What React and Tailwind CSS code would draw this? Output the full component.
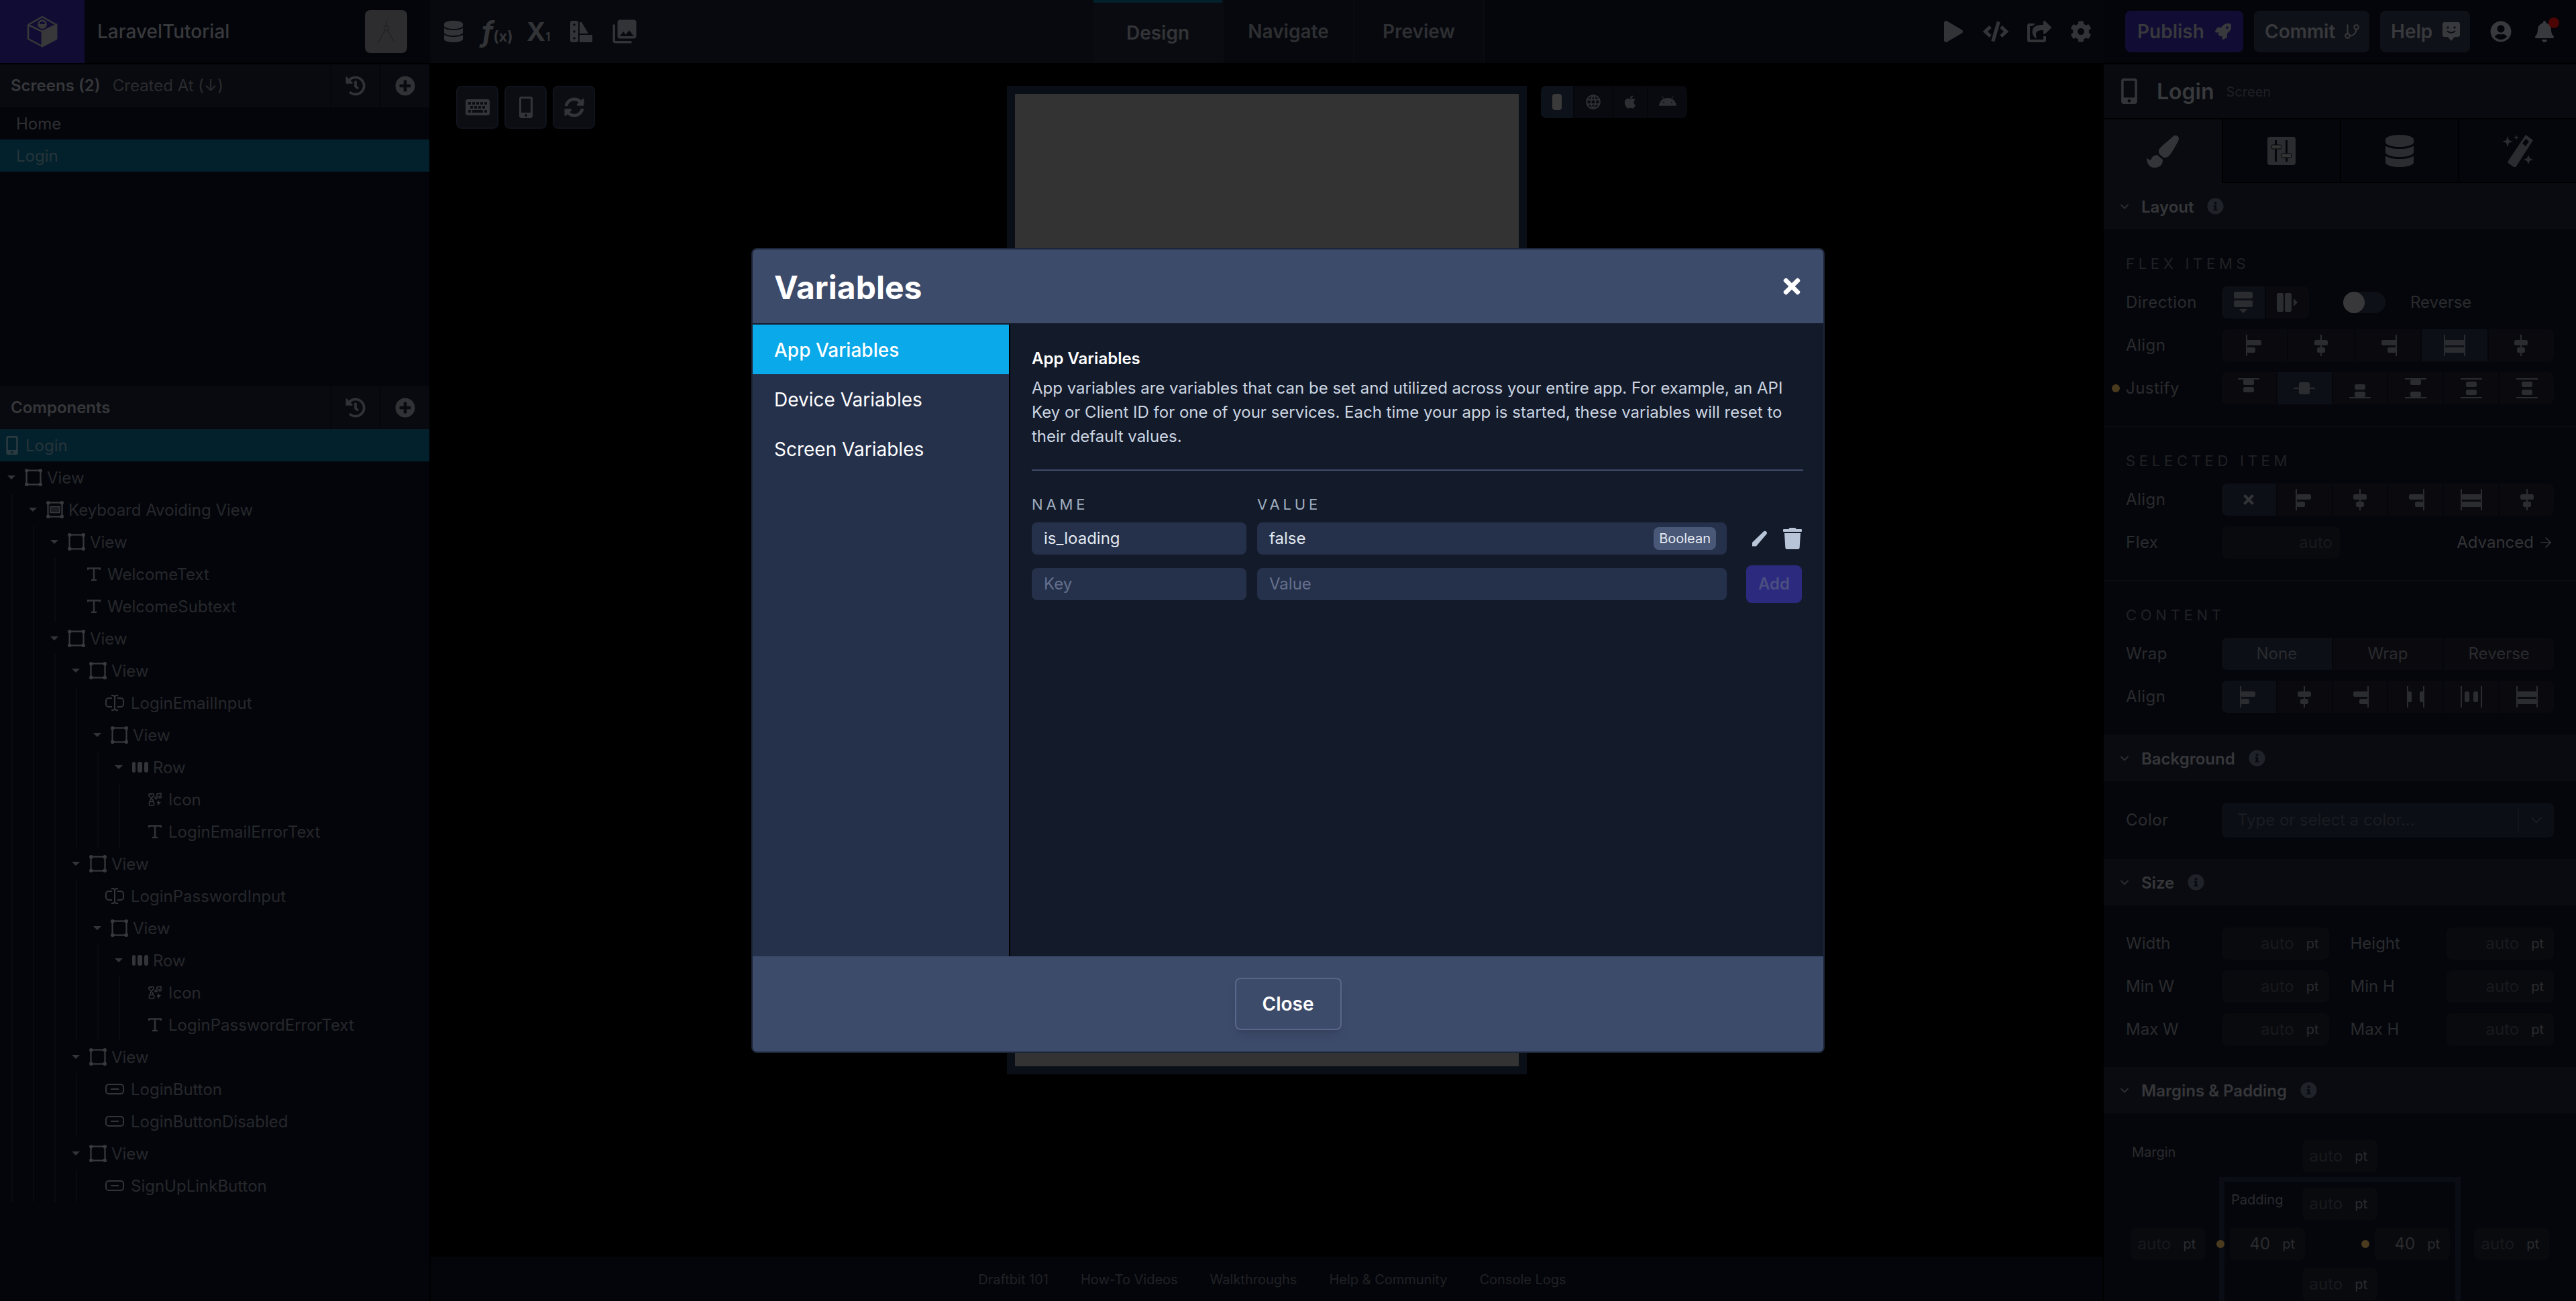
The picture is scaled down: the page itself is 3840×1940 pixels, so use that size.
import React from "react";
import {
  FaBell,
  FaCode,
  FaCog,
  FaDatabase,
  FaInfoCircle,
  FaKeyboard,
  FaMobileAlt,
  FaPaintBrush,
  FaPlay,
  FaPlusCircle,
  FaRocket,
  FaShareSquare,
  FaSyncAlt,
  FaTimes,
  FaTrash,
  FaUserCircle,
  FaApple,
  FaAndroid,
  FaHistory,
} from "react-icons/fa";
import { MdPhotoLibrary } from "react-icons/md";
import { TbWorld } from "react-icons/tb";
import { ArrowRight, ChevronDown, GitBranch } from "lucide-react";

const Logo = () => (
  <svg width="48" height="48" viewBox="0 0 48 48" fill="none" stroke="#38383a" strokeWidth="2.5">
    <path d="M24 2 45 14v21L24 46 3 35V14z" strokeLinejoin="round" />
    <path d="M24 24 45 14v21L24 46z" fill="#38383a" />
    <path d="M3 14 24 24v22" />
    <circle cx="24" cy="13" r="5.5" />
    <path d="M18.5 13a5.5 5.5 0 0 0 11 0" fill="#38383a" />
  </svg>
);

const CompassIcon = () => (
  <svg width="26" height="32" viewBox="0 0 26 32" fill="none" stroke="#222224" strokeWidth="1.5">
    <circle cx="13" cy="11" r="3.500" />
    <path d="M13 0v7.500M11 14 1 32M15 14l10 18" />
  </svg>
);

const SwatchIcon = () => (
  <svg width="33" height="32" viewBox="0 0 33 32" fill="#323336">
    <rect x="0" y="0" width="12" height="32" rx="3" />
    <circle cx="6" cy="6" r="1.8" fill="#07090e" />
    <circle cx="6" cy="16" r="1.8" fill="#07090e" />
    <circle cx="6" cy="26" r="1.8" fill="#07090e" />
    <path d="M14 2h3l10 17H14zM14 21h19v11H14z" />
  </svg>
);

const HelpIcon = () => (
  <svg width="26" height="28" viewBox="0 0 26 28">
    <path d="M3 0h20a3 3 0 0 1 3 3v16a3 3 0 0 1-3 3h-5l-5 6-5-6H3a3 3 0 0 1-3-3V3a3 3 0 0 1 3-3z" fill="#38393c" />
    <circle cx="8" cy="8" r="1.800" fill="#0f1118" />
    <circle cx="18" cy="8" r="1.800" fill="#0f1118" />
    <path d="M7 13c3 3.500 9 3.500 12 0" fill="none" stroke="#0f1118" strokeWidth="2" />
  </svg>
);

const PencilIcon = () => (
  <svg width="24" height="24" viewBox="0 0 24 24" fill="#b8c4d8">
    <path d="M18 1.500a3 3 0 0 1 4.500 3.800L7 23.500H1V18z" />
  </svg>
);

const SliderTabIcon = () => (
  <svg width="42" height="42" viewBox="0 0 42 42" fill="#2b2c2f">
    <rect width="42" height="42" rx="4" />
    <path d="M11 5h3v32h-3zM27 5h3v32h-3z" fill="#05060b" />
    <rect x="6" y="12" width="15" height="6" rx="2" fill="#333" stroke="#05060b" />
    <rect x="21" y="25" width="15" height="6" rx="2" fill="#333" stroke="#05060b" />
  </svg>
);

const WandIcon = () => (
  <svg width="48" height="48" viewBox="0 0 48 48" fill="#2b2c2f">
    <path d="M36 0 47 8 22 47a3 3 0 0 1-4 1l-7-5a3 3 0 0 1-1-4z" />
    <path d="M36 6 41 10 36 17 31 13z" fill="#05060b" />
    <path d="M9 2l2 6 6 2-6 2-2 6-2-6-6-2 6-2zM22 0l1 3 3 1-3 1-1 3-1-3-3-1 3-1zM40 30l2 5 5 2-5 2-2 5-2-5-5-2 5-2z" />
  </svg>
);

const ViewIcon = ({ keyboard }) => (
  <svg width="26" height="26" viewBox="0 0 26 26" fill="none" stroke="#38393c" strokeWidth="2.2">
    <rect x="2.500" y="2.500" width="21" height="21" />
    <g fill="#38393c" stroke="none">
      <circle cx="2.800" cy="2.800" r="2.800" />
      <circle cx="23.200" cy="2.800" r="2.800" />
      <circle cx="2.800" cy="23.200" r="2.800" />
      <circle cx="23.200" cy="23.200" r="2.800" />
    </g>
    {keyboard && <rect x="6" y="8.500" width="14" height="9" strokeWidth="1.5" stroke="#38393c" fill="#1c1d20" />}
  </svg>
);

const TextIcon = () => (
  <svg width="20" height="20" viewBox="0 0 20 20" fill="none" stroke="#333437" strokeWidth="2.4">
    <path d="M1 4V1.500h18V4M10 1.500V19M6 19h8" />
  </svg>
);

const InputIcon = () => (
  <svg width="28" height="24" viewBox="0 0 28 24" fill="none" stroke="#333437" strokeWidth="2">
    <path d="M10 5H5a4 4 0 0 0-4 4v5a4 4 0 0 0 4 4h5M18 5h5a4 4 0 0 1 4 4v5a4 4 0 0 1-4 4h-5" />
    <path d="M9 1h3l2 2 2-2h3M9 23h3l2-2 2 2h3M14 3v18" />
  </svg>
);

const ButtonIcon = () => (
  <svg width="28" height="16" viewBox="0 0 28 16" fill="none" stroke="#333437" strokeWidth="2">
    <rect x="1" y="1" width="26" height="14" rx="4" />
    <path d="M8 8h12" />
  </svg>
);

const RowIcon = () => (
  <svg width="24" height="16" viewBox="0 0 24 16" fill="#333437">
    <rect x="0" y="0" width="5" height="16" rx="2.500" />
    <rect x="8" y="0" width="7" height="16" rx="3" />
    <rect x="18" y="0" width="6" height="16" rx="3" />
  </svg>
);

const GlyphIcon = () => (
  <svg width="20" height="20" viewBox="0 0 20 20" fill="none" stroke="#333437" strokeWidth="1.6">
    <path d="M4.500 8.500 1 4.500C0 2.500 3 .5 4.500 2.500 6-.5 9 2.500 8 4.500z" />
    <path d="M13 7V2l6-1v5M13 7a1.500 1.500 0 1 1-2-1M19 6a1.500 1.500 0 1 1-2-1" />
    <rect x="1.500" y="13.500" width="7" height="5.500" rx="1" />
    <path d="M3 13v-1.500a2 2 0 0 1 4 0V13" />
    <path d="M16 11l-4 5h3l-1 4 5-6h-3z" fill="#333437" stroke="none" />
  </svg>
);

const treeIcons = {
  view: <ViewIcon />,
  kav: <ViewIcon keyboard />,
  row: <RowIcon />,
  text: <TextIcon />,
  input: <InputIcon />,
  button: <ButtonIcon />,
  icon: <GlyphIcon />,
};

const tree = [
  {
    kind: "view",
    label: "View",
    items: [
      {
        kind: "kav",
        label: "Keyboard Avoiding View",
        items: [
          {
            kind: "view",
            label: "View",
            items: [
              { kind: "text", label: "WelcomeText", indent: "ml-[27px]" },
              { kind: "text", label: "WelcomeSubtext", indent: "ml-[27px]" },
            ],
          },
          {
            kind: "view",
            label: "View",
            items: [
              {
                kind: "view",
                label: "View",
                items: [
                  { kind: "input", label: "LoginEmailInput" },
                  {
                    kind: "view",
                    label: "View",
                    items: [
                      {
                        kind: "row",
                        label: "Row",
                        items: [
                          { kind: "icon", label: "Icon" },
                          { kind: "text", label: "LoginEmailErrorText" },
                        ],
                      },
                    ],
                  },
                ],
              },
              {
                kind: "view",
                label: "View",
                items: [
                  { kind: "input", label: "LoginPasswordInput" },
                  {
                    kind: "view",
                    label: "View",
                    items: [
                      {
                        kind: "row",
                        label: "Row",
                        items: [
                          { kind: "icon", label: "Icon" },
                          { kind: "text", label: "LoginPasswordErrorText" },
                        ],
                      },
                    ],
                  },
                ],
              },
              {
                kind: "view",
                label: "View",
                items: [
                  { kind: "button", label: "LoginButton" },
                  { kind: "button", label: "LoginButtonDisabled" },
                ],
              },
              {
                kind: "view",
                label: "View",
                items: [{ kind: "button", label: "SignUpLinkButton" }],
              },
            ],
          },
        ],
      },
    ],
  },
];

const TreeNode = ({ node }) => {
  if (!node.items) {
    return (
      <div className="flex h-[48px] items-center">
        <span className={`flex items-center gap-[10px] ${node.indent || "ml-[22px]"}`}>
          {treeIcons[node.kind]}
          <span className="whitespace-nowrap pt-[2px]">{node.label}</span>
        </span>
      </div>
    );
  }
  return (
    <div>
      <div className="flex h-[48px] items-center">
        <span className="flex w-[20px] justify-center">
          <span className="h-0 w-0 border-x-[6px] border-t-[6px] border-x-transparent border-t-[#333437]" />
        </span>
        <span className="ml-[10px] flex items-center gap-[7px]">
          {treeIcons[node.kind]}
          <span className="whitespace-nowrap pt-[2px]">{node.label}</span>
        </span>
      </div>
      <div className="ml-[10px] border-l-2 border-[#0a0b10] pl-[20px]">
        {node.items.map((child, i) => (
          <TreeNode key={i} node={child} />
        ))}
      </div>
    </div>
  );
};

const PanelHeader = ({ children }) => (
  <div className="flex h-[64px] items-center bg-[#090a0f]">
    <div className="flex flex-1 items-center pl-[16px] text-[24px]">{children}</div>
    <div className="flex h-full w-[74px] items-center justify-center border-l-2 border-[#05060a] text-[30px] text-[#313235]">
      <FaHistory />
    </div>
    <div className="flex h-full w-[74px] items-center justify-center border-l-2 border-[#05060a] text-[30px] text-[#313235]">
      <FaPlusCircle />
    </div>
  </div>
);

const LeftPanel = () => (
  <aside className="flex w-[640px] shrink-0 flex-col bg-[#04050a] text-[24px] text-[#26282c]">
    <div className="h-[480px]">
      <PanelHeader>
        <span className="font-semibold text-[#36373a]">Screens (2)</span>
        <span className="ml-[18px] text-[#2a2b2e]">Created At (↓)</span>
      </PanelHeader>
      <div className="flex h-[48px] items-center pl-[24px] pt-[2px] text-[#2e2f32]">Home</div>
      <div className="flex h-[48px] items-center bg-[#03212c] pl-[24px] pt-[2px] text-[#26343a]">Login</div>
    </div>
    <PanelHeader>
      <span className="font-semibold text-[#36373a]">Components</span>
    </PanelHeader>
    <div className="flex h-[48px] items-center gap-[6px] bg-[#03212c] pl-[4px] text-[#26343a]">
      <FaMobileAlt className="text-[28px] text-[#2a3a40]" />
      <span className="pt-[2px]">Login</span>
    </div>
    <div className="pl-[7px]">
      {tree.map((node, i) => (
        <TreeNode key={i} node={node} />
      ))}
    </div>
  </aside>
);

const TopBar = () => (
  <header className="flex h-[96px] shrink-0 border-b-2 border-black bg-[#04050a]">
    <div className="flex w-[640px] shrink-0 items-center">
      <div className="flex h-full w-[126px] items-center justify-center bg-[#110c33]">
        <Logo />
      </div>
      <span className="ml-[19px] text-[28px] font-medium text-[#38393c]">LaravelTutorial</span>
      <div className="ml-auto mr-[33px] flex h-[64px] w-[63px] items-center justify-center rounded-lg bg-[#2d2d2f]">
        <CompassIcon />
      </div>
    </div>
    <div className="flex flex-1 border-l-2 border-[#05060a] bg-[#05060b]">
      <div className="flex w-[988px] items-center bg-[#07090e] pl-[18px] text-[#323336]">
        <FaDatabase className="text-[32px]" />
        <span className="ml-[26px] flex w-[41px] items-baseline font-bold">
          <span className="text-[42px] italic leading-none">f</span>
          <span className="text-[22px] leading-none">(x)</span>
        </span>
        <span className="ml-[26px] flex w-[33px] items-baseline font-bold">
          <span className="text-[38px] leading-none">X</span>
          <span className="text-[17px] leading-none">1</span>
        </span>
        <span className="ml-[32px]">
          <SwatchIcon />
        </span>
        <MdPhotoLibrary className="ml-[27px] text-[42px]" />
      </div>
      <nav className="flex text-[28px] font-semibold text-[#2e2f32]">
        <div className="flex w-[192px] items-center justify-center border-t-4 border-[#03212c] bg-[#0a0b10] text-[#333437]">Design</div>
        <div className="flex w-[195px] items-center justify-center border-l-2 border-[#0a0b10] bg-[#07080d]">Navigate</div>
        <div className="flex w-[196px] items-center justify-center border-x-2 border-[#0a0b10] bg-[#07080d]">Preview</div>
      </nav>
      <div className="ml-auto flex items-center gap-[28px] pr-[16px] text-[32px] text-[#323336]">
        <FaPlay />
        <FaCode className="text-[38px]" />
        <FaShareSquare className="text-[36px]" />
        <FaCog />
      </div>
    </div>
    <div className="flex w-[706px] shrink-0 items-center border-l-2 border-[#05060a] pl-[32px] text-[28px] font-semibold text-[#38393c]">
      <button className="flex h-[62px] w-[176px] items-center gap-[16px] rounded-lg bg-[#110c33] pl-[18px]">
        Publish
        <FaRocket className="text-[24px]" />
      </button>
      <button className="ml-[16px] flex h-[62px] w-[172px] items-center gap-[12px] rounded-lg bg-[#0f1118] pl-[16px]">
        Commit
        <GitBranch size={26} strokeWidth={1.8} />
      </button>
      <button className="ml-[16px] flex h-[62px] w-[134px] items-center gap-[15px] rounded-lg bg-[#0f1118] pl-[16px]">
        Help
        <HelpIcon />
      </button>
      <FaUserCircle className="ml-[30px] text-[32px]" />
      <span className="relative ml-[33px]">
        <FaBell className="text-[32px]" />
        <span className="absolute -right-[6px] -top-[5px] h-[16px] w-[16px] rounded-full bg-[#4b0505]" />
      </span>
    </div>
  </header>
);

const ToolButton = ({ children }) => (
  <div className="flex h-[64px] w-[63px] items-center justify-center rounded-lg border-2 border-[#10131b] bg-[#0b0d13] text-[#333437]">
    {children}
  </div>
);

const Canvas = () => (
  <main className="flex min-w-0 flex-1 flex-col border-l-2 border-black bg-black">
    <div className="grid flex-1 grid-cols-[1fr_775px_1fr] pt-[32px]">
      <div className="flex items-start gap-[9px] pl-[38px]">
        <ToolButton>
          <FaKeyboard className="text-[36px]" />
        </ToolButton>
        <ToolButton>
          <FaMobileAlt className="text-[32px]" />
        </ToolButton>
        <ToolButton>
          <FaSyncAlt className="text-[30px]" />
        </ToolButton>
      </div>
      <div className="h-[1474px] bg-[#0a0e17] p-[12px]">
        <div className="h-full bg-[#333333]" />
      </div>
      <div className="pl-[21px]">
        <div className="flex h-[48px] w-[218px] overflow-hidden rounded-lg bg-[#090a0f] text-[#2e2f32]">
          <div className="flex w-[48px] items-center justify-center bg-[#0d1119]">
            <span className="h-[24px] w-[14px] rounded-sm bg-[#3a3a3a]" />
          </div>
          <div className="flex w-[58px] items-center justify-center border-l-2 border-[#05060a] text-[26px]">
            <TbWorld />
          </div>
          <div className="flex w-[52px] items-center justify-center border-l-2 border-[#05060a] text-[22px]">
            <FaApple />
          </div>
          <div className="flex flex-1 items-center justify-center border-l-2 border-[#05060a] text-[26px]">
            <FaAndroid />
          </div>
        </div>
      </div>
    </div>
    <footer className="flex h-[66px] shrink-0 items-center justify-center gap-[48px] bg-[#04050a] pl-[17px] pt-[2px] text-[20px] text-[#202125]">
      <span>Draftbit 101</span>
      <span>How-To Videos</span>
      <span>Walkthroughs</span>
      <span>Help &amp; Community</span>
      <span>Console Logs</span>
    </footer>
  </main>
);

const alignShapes = {
  hStart: { lines: [[4, 0, 4, 32]], rects: [[4, 8, 22, 8], [4, 19, 13, 8]] },
  hCenter: { lines: [[16, 0, 16, 32]], rects: [[6, 8, 20, 8], [10, 19, 12, 8]] },
  hEnd: { lines: [[28, 0, 28, 32]], rects: [[6, 8, 22, 8], [15, 19, 13, 8]] },
  hStretch: { lines: [[1, 0, 1, 32], [31, 0, 31, 32]], rects: [[1, 8, 30, 8], [1, 19, 30, 8]] },
  hBetween: { lines: [[4, 0, 4, 32], [28, 0, 28, 32]], rects: [[4, 8, 6, 16], [22, 8, 6, 16]] },
  hAround: { lines: [[1, 0, 1, 32], [31, 0, 31, 32]], rects: [[6, 8, 7, 16], [19, 8, 7, 16]] },
  vStart: { lines: [[0, 2, 32, 2]], rects: [[8, 3, 16, 8], [8, 14, 16, 8]] },
  vCenter: { lines: [[0, 16, 32, 16]], rects: [[8, 7, 16, 18]] },
  vEnd: { lines: [[0, 30, 32, 30]], rects: [[8, 10, 16, 8], [8, 21, 16, 8]] },
  vBetween: { lines: [[0, 2, 32, 2], [0, 30, 32, 30]], rects: [[8, 3, 16, 8], [8, 21, 16, 8]] },
  vAround: { lines: [[0, 2, 32, 2], [0, 30, 32, 30]], rects: [[8, 6, 16, 8], [8, 18, 16, 8]] },
  dirColumn: { lines: [], rects: [[2, 0, 28, 10], [2, 13, 28, 10]], arrow: "M10 26h12l-6 6z" },
  dirRow: { lines: [], rects: [[0, 2, 10, 28], [12, 2, 10, 28]], arrow: "M25 10v12l6-6z" },
};

const AlignIcon = ({ name }) => {
  const shape = alignShapes[name];
  return (
    <svg width="32" height="32" viewBox="0 0 32 32">
      {shape.lines.map((l, i) => (
        <line key={i} x1={l[0]} y1={l[1]} x2={l[2]} y2={l[3]} stroke="#2b2c2f" strokeWidth="2" />
      ))}
      {shape.rects.map((r, i) => (
        <rect key={i} x={r[0]} y={r[1]} width={r[2]} height={r[3]} rx="2.500" fill="#2b2c2f" />
      ))}
      {shape.arrow && <path d={shape.arrow} fill="#2b2c2f" />}
    </svg>
  );
};

const Segments = ({ items, active }) => (
  <div className="flex h-[48px] flex-1 gap-[2px] overflow-hidden rounded-lg">
    {items.map((item, i) => (
      <div
        key={i}
        className={`flex flex-1 items-center justify-center ${i === active ? "bg-[#0c0f16]" : "bg-[#09090e]"}`}
      >
        {typeof item === "string" ? <AlignIcon name={item} /> : item}
      </div>
    ))}
  </div>
);

const Field = ({ label, dot, children }) => (
  <div className="relative flex items-center">
    {dot && <span className="absolute -left-[21px] h-[12px] w-[12px] rounded-full bg-[#4a3a1e]" />}
    <span className="w-[143px] shrink-0 tracking-[0.02em]">{label}</span>
    {children}
  </div>
);

const SectionHead = ({ title }) => (
  <div className="flex h-[69px] items-center bg-[#0a0b10] pl-[21px] text-[24px] font-semibold text-[#36373a]">
    <ChevronDown size={20} strokeWidth={2.5} className="text-[#2b2c2f]" />
    <span className="ml-[15px] pt-[2px]">{title}</span>
    <FaInfoCircle className="ml-[20px] text-[25px] text-[#1f2228]" />
  </div>
);

const Caption = ({ children }) => (
  <div className="text-[22px] leading-[26px] tracking-[0.26em] text-[#202125]">{children}</div>
);

const UnitInput = ({ value = "auto", wide, dot }) => (
  <div
    className={`relative flex h-[48px] items-center justify-end rounded-lg bg-[#090a0e] pr-[15px] ${wide ? "w-[160px]" : "w-[112px]"}`}
  >
    {dot && <span className="absolute -left-[20px] h-[12px] w-[12px] rounded-full bg-[#4a3a1e]" />}
    <span className={value === "auto" ? "text-[#18191d]" : "text-[#2b2c2f]"}>{value}</span>
    <span className="ml-[18px] text-[20px] text-[#2b2c2f]">pt</span>
  </div>
);

const SizeRow = ({ left, right }) => (
  <div className="flex items-center">
    <span className="w-[143px]">{left}</span>
    <UnitInput wide />
    <span className="ml-[32px] w-[144px]">{right}</span>
    <UnitInput wide />
  </div>
);

const RightPanel = () => (
  <aside className="w-[706px] shrink-0 border-l-2 border-black bg-[#05060b] text-[24px] text-[#2a2b2e]">
    <div className="flex h-[82px] items-center border-b-2 border-black bg-[#090a0f] pl-[19px]">
      <FaMobileAlt className="text-[38px] text-[#333437]" />
      <span className="ml-[22px] pt-[2px] text-[32px] font-semibold text-[#38393c]">Login</span>
      <span className="ml-[18px] pt-[2px] text-[20px] text-[#1f2024]">Screen</span>
    </div>
    <div className="grid h-[95px] grid-cols-4 text-[#2b2c2f]">
      <div className="flex items-center justify-center bg-[#0a0b10] text-[#333437]">
        <FaPaintBrush className="text-[48px]" />
      </div>
      <div className="flex items-center justify-center border-b-2 border-l-2 border-black">
        <SliderTabIcon />
      </div>
      <div className="flex items-center justify-center border-b-2 border-l-2 border-black">
        <FaDatabase className="text-[48px]" />
      </div>
      <div className="flex items-center justify-center border-b-2 border-l-2 border-black">
        <WandIcon />
      </div>
    </div>
    <SectionHead title="Layout" />
    <div className="flex flex-col gap-[16px] border-b-2 border-[#0a0b10] px-[33px] pb-[32px] pt-[38px]">
      <div className="mb-[5px]">
        <Caption>FLEX ITEMS</Caption>
      </div>
      <Field label="Direction">
        <div className="flex h-[48px] w-[130px] gap-[2px] overflow-hidden rounded-lg">
          <div className="flex flex-1 items-center justify-center bg-[#0c0f16]">
            <AlignIcon name="dirColumn" />
          </div>
          <div className="flex flex-1 items-center justify-center bg-[#09090e]">
            <AlignIcon name="dirRow" />
          </div>
        </div>
        <span className="ml-[51px] flex h-[32px] w-[63px] rounded-full bg-[#0d1017]">
          <span className="h-[32px] w-[32px] rounded-full bg-[#38383a]" />
        </span>
        <span className="ml-[37px]">Reverse</span>
      </Field>
      <Field label="Align">
        <Segments active={3} items={["hStart", "hCenter", "hEnd", "hStretch", "hCenter"]} />
      </Field>
      <Field label="Justify" dot>
        <Segments active={1} items={["vStart", "vCenter", "vEnd", "vBetween", "vAround", "vAround"]} />
      </Field>
    </div>
    <div className="flex flex-col gap-[16px] border-b-2 border-[#0a0b10] px-[33px] pb-[32px] pt-[37px]">
      <div className="mb-[5px]">
        <Caption>SELECTED ITEM</Caption>
      </div>
      <Field label="Align">
        <Segments
          active={0}
          items={[
            <FaTimes key="none" className="text-[22px] text-[#333437]" />,
            "hStart",
            "hCenter",
            "hEnd",
            "hStretch",
            "hCenter",
          ]}
        />
      </Field>
      <Field label="Flex">
        <div className="flex h-[48px] w-[176px] items-center justify-end rounded-lg bg-[#090a0e] pr-[11px] text-[#18191d]">auto</div>
        <span className="ml-auto flex items-center gap-[6px] text-[#333437]">
          Advanced <ArrowRight size={24} strokeWidth={1.6} />
        </span>
      </Field>
    </div>
    <div className="flex flex-col gap-[16px] px-[33px] pb-[33px] pt-[37px]">
      <div className="mb-[5px]">
        <Caption>CONTENT</Caption>
      </div>
      <Field label="Wrap">
        <Segments active={0} items={["None", "Wrap", "Reverse"].map((t) => <span key={t}>{t}</span>)} />
      </Field>
      <Field label="Align">
        <Segments active={0} items={["hStart", "hCenter", "hEnd", "hBetween", "hAround", "hStretch"]} />
      </Field>
    </div>
    <SectionHead title="Background" />
    <div className="px-[33px] pb-[32px] pt-[32px]">
      <Field label="Color">
        <div className="flex h-[52px] flex-1 items-center rounded-lg bg-[#0b0e15] pl-[23px] text-[#1a1c21]">
          <span className="flex-1">Type or select a color...</span>
          <span className="flex h-[36px] w-[54px] items-center justify-center border-l-2 border-[#12151d] text-[#1f2126]">
            <ChevronDown size={28} strokeWidth={1.5} />
          </span>
        </div>
      </Field>
    </div>
    <SectionHead title="Size" />
    <div className="flex flex-col gap-[16px] px-[33px] pb-[32px] pt-[33px]">
      <SizeRow left="Width" right="Height" />
      <SizeRow left="Min W" right="Min H" />
      <SizeRow left="Max W" right="Max H" />
    </div>
    <SectionHead title="Margins & Padding" />
    <div className="px-[40px] pt-[40px]">
      <div className="flex">
        <span className="ml-[2px] w-[254px] text-[20px] leading-[36px]">Margin</span>
        <UnitInput />
      </div>
      <div className="mt-[7px] flex gap-[20px]">
        <div className="pt-[76px]">
          <UnitInput />
        </div>
        <div className="w-[360px] border-8 border-[#0a0d14] px-[8px] pb-[40px] pt-[8px]">
          <div className="flex">
            <span className="ml-[2px] w-[106px] text-[20px] leading-[36px]">Padding</span>
            <UnitInput />
          </div>
          <div className="mt-[12px] flex justify-between">
            <UnitInput value="40" dot />
            <UnitInput value="40" dot />
          </div>
          <div className="mt-[12px] flex justify-center">
            <UnitInput />
          </div>
        </div>
        <div className="pt-[76px]">
          <UnitInput />
        </div>
      </div>
    </div>
  </aside>
);

const VariablesModal = () => (
  <div className="absolute inset-0 flex items-center justify-center">
    <div className="flex h-[1200px] w-[1600px] flex-col overflow-hidden rounded-lg border-2 border-[#1c2539] bg-[#131a2a]">
      <div className="flex h-[112px] shrink-0 items-center justify-between border-b-2 border-[#131a2a] bg-[#3d4b6b] pl-[32px] pr-[29px]">
        <h1 className="pt-[4px] text-[48px] font-bold text-white">Variables</h1>
        <FaTimes className="text-[36px] text-white" />
      </div>
      <div className="flex min-h-0 flex-1">
        <div className="w-[384px] shrink-0 border-r-2 border-black bg-[#25304b] text-[28px] text-white">
          <div className="flex h-[74px] items-center bg-[#0aa9e9] pl-[32px] pt-[2px] font-medium">App Variables</div>
          <div className="flex h-[74px] items-center pl-[32px] pt-[2px]">Device Variables</div>
          <div className="flex h-[74px] items-center pl-[32px] pt-[2px]">Screen Variables</div>
        </div>
        <div className="flex-1 px-[32px] pt-[36px]">
          <h2 className="text-[24px] font-semibold leading-[30px] text-white">App Variables</h2>
          <p className="mt-[11px] text-[24px] leading-[36px] text-[#cbd5e1]">
            App variables are variables that can be set and utilized across your entire app. For example, an API
            <br />
            Key or Client ID for one of your services. Each time your app is started, these variables will reset to
            <br />
            their default values.
          </p>
          <div className="mt-[31px] h-[2px] bg-[#3d4b6b]" />
          <div className="mt-[37px] flex text-[22px] leading-[26px] tracking-[0.22em] text-[#a0aec0]">
            <span className="w-[336px]">NAME</span>
            <span>VALUE</span>
          </div>
          <div className="mt-[14px] flex h-[48px] items-center gap-[16px] text-[24px] text-[#e2e8f0]">
            <div className="flex h-full w-[320px] items-center rounded-lg bg-[#25304b] pl-[18px]">is_loading</div>
            <div className="flex h-full w-[700px] items-center justify-between rounded-lg bg-[#25304b] pl-[18px] pr-[16px]">
              <span>false</span>
              <span className="rounded-lg bg-[#4a5878] px-[8px] py-[3px] text-[20px] leading-[28px]">Boolean</span>
            </div>
            <span className="ml-[21px]">
              <PencilIcon />
            </span>
            <FaTrash className="ml-[5px] text-[32px] text-[#b8c4d8]" />
          </div>
          <div className="mt-[20px] flex h-[48px] items-center gap-[16px] text-[24px] text-[#64708c]">
            <div className="flex h-full w-[320px] items-center rounded-lg bg-[#25304b] pl-[18px]">Key</div>
            <div className="flex h-full w-[700px] items-center rounded-lg bg-[#25304b] pl-[18px]">Value</div>
            <button className="ml-[13px] h-[56px] w-[83px] rounded-lg bg-[#2c2a7f] font-semibold text-[#4a4f80]">Add</button>
          </div>
        </div>
      </div>
      <div className="flex h-[142px] shrink-0 items-center justify-center bg-[#3d4b6b]">
        <button className="h-[78px] w-[159px] rounded-lg border-2 border-[#586689] text-[28px] font-semibold text-white shadow-lg">
          Close
        </button>
      </div>
    </div>
  </div>
);

export default function App() {
  return (
    <div className="relative flex h-[1940px] w-full flex-col overflow-hidden bg-black font-['Inter',sans-serif] antialiased">
      <TopBar />
      <div className="flex min-h-0 flex-1">
        <LeftPanel />
        <Canvas />
        <RightPanel />
      </div>
      <VariablesModal />
    </div>
  );
}
